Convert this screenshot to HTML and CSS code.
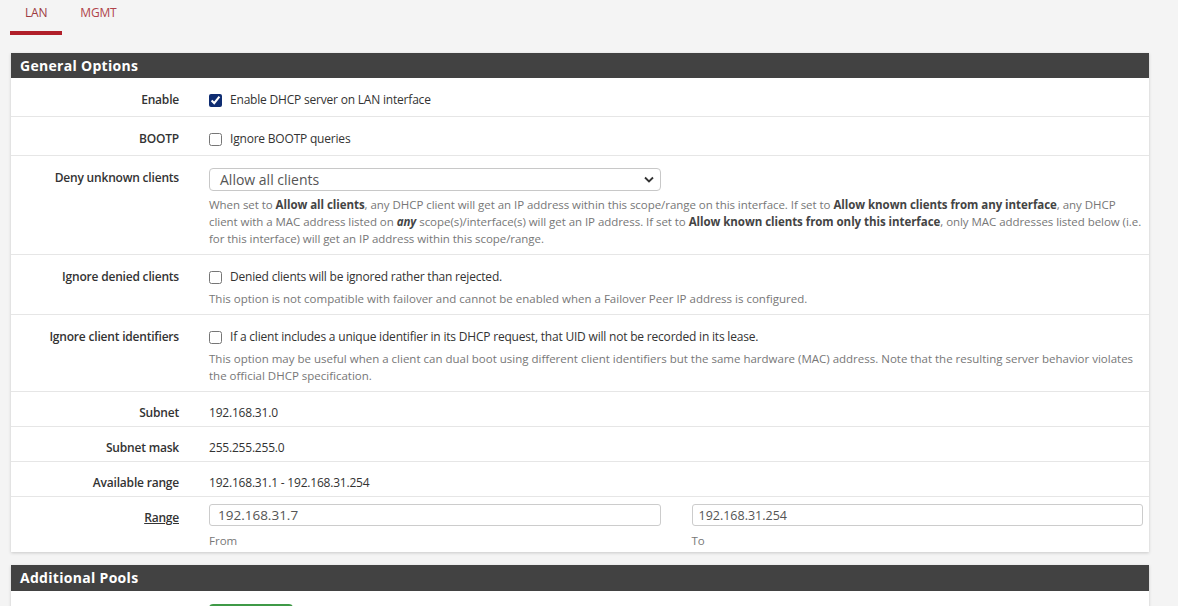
FILE: index.html
```html
<!DOCTYPE html>
<html lang="en">

<head>
    <meta charset="UTF-8">
    <meta name="viewport" content="width=device-width, initial-scale=1.0">
    <title>DHCP Server: LAN</title>
    <link rel="stylesheet" href="styles.css">
</head>

<body>
    <!-- INTERFACE TABS -->
    <ul class="tabs">
        <li class="tab active">LAN</li>
        <li class="tab">MGMT</li>
    </ul>

    <!-- GENERAL OPTIONS -->
    <div class="panel">
        <h2 class="panel-title">General Options</h2>
        <div class="panel-body">
            <div class="form-row">
                <div class="form-label">Enable</div>
                <div class="form-field">
                    <label class="check"><input type="checkbox" class="checked" checked> Enable DHCP server on LAN interface</label>
                </div>
            </div>

            <div class="form-row">
                <div class="form-label">BOOTP</div>
                <div class="form-field">
                    <label class="check"><input type="checkbox"> Ignore BOOTP queries</label>
                </div>
            </div>

            <div class="form-row">
                <div class="form-label">Deny unknown clients</div>
                <div class="form-field">
                    <div class="select">
                        <span>Allow all clients</span>
                        <svg width="10" height="7" viewBox="0 0 10 7">
                            <path d="M1 1.5 L5 5.5 L9 1.5" fill="none" stroke="#333" stroke-width="1.8" />
                        </svg>
                    </div>
                    <p class="help wide">When set to <b>Allow all clients</b>, any DHCP client will get an IP address within this scope/range on this interface. If set to <b>Allow known clients from any interface</b>, any DHCP<br>client with a MAC address listed on <b><i>any</i></b> scope(s)/interface(s) will get an IP address. If set to <b>Allow known clients from only this interface</b>, only MAC addresses listed below (i.e.<br>for this interface) will get an IP address within this scope/range.</p>
                </div>
            </div>

            <div class="form-row">
                <div class="form-label">Ignore denied clients</div>
                <div class="form-field">
                    <label class="check"><input type="checkbox"> Denied clients will be ignored rather than rejected.</label>
                    <p class="help">This option is not compatible with failover and cannot be enabled when a Failover Peer IP address is configured.</p>
                </div>
            </div>

            <div class="form-row">
                <div class="form-label">Ignore client identifiers</div>
                <div class="form-field">
                    <label class="check"><input type="checkbox"> If a client includes a unique identifier in its DHCP request, that UID will not be recorded in its lease.</label>
                    <p class="help">This option may be useful when a client can dual boot using different client identifiers but the same hardware (MAC) address. Note that the resulting server behavior violates the official DHCP specification.</p>
                </div>
            </div>

            <div class="form-row static">
                <div class="form-label">Subnet</div>
                <div class="form-field">192.168.31.0</div>
            </div>

            <div class="form-row static">
                <div class="form-label">Subnet mask</div>
                <div class="form-field">255.255.255.0</div>
            </div>

            <div class="form-row static">
                <div class="form-label">Available range</div>
                <div class="form-field">192.168.31.1 - 192.168.31.254</div>
            </div>

            <div class="form-row range">
                <div class="form-label"><u>Range</u></div>
                <div class="form-field range-inputs">
                    <div>
                        <input type="text" class="text-input" value="192.168.31.7">
                        <p class="help">From</p>
                    </div>
                    <div>
                        <input type="text" class="text-input small" value="192.168.31.254">
                        <p class="help">To</p>
                    </div>
                </div>
            </div>
        </div>
    </div>

    <!-- ADDITIONAL POOLS -->
    <div class="panel">
        <h2 class="panel-title">Additional Pools</h2>
        <div class="panel-body">
            <div class="pool-row">
                <div class="btn-add"></div>
            </div>
        </div>
    </div>
</body>

</html>
```

FILE: styles.css
```css
* {
    margin: 0;
    padding: 0;
    box-sizing: border-box;
    font-family: 'Open Sans', 'Noto Sans', sans-serif;
}

body {
    background-color: #f4f4f4;
    color: #333;
    font-size: 12px;
    padding: 0 29px 0 11px;
    height: 606px;
    overflow: hidden;
}

/* TABS */
.tabs {
    list-style: none;
    display: flex;
    height: 35px;
    margin-left: -1px;
}

.tab {
    padding: 4px 15px 0;
    margin-right: 3px;
    color: #b0434a;
    font-size: 12px;
    letter-spacing: -0.2px;
}

.tab.active {
    color: #9c3a40;
    border-bottom: 4px solid #b11f29;
}

/* PANELS */
.panel {
    margin-top: 18px;
    background-color: #fff;
    box-shadow: 0 1px 3px rgba(0, 0, 0, 0.18);
}

.panel + .panel {
    margin-top: 13px;
}

.panel-title {
    background-color: #424242;
    color: #fff;
    font-size: 14px;
    font-weight: 700;
    height: 25px;
    line-height: 25px;
    padding-left: 9px;
    letter-spacing: 0.3px;
}

.panel + .panel .panel-title {
    height: 26px;
    line-height: 26px;
}

.form-row {
    display: flex;
    border-top: 1px solid #e6e6e6;
    padding: 12px 0 7px;
}

.form-row:first-child {
    border-top: none;
}

.form-row.static {
    padding: 11px 0 4px;
}

.form-row.range {
    padding: 7px 0 3px;
}

.form-label {
    flex: none;
    width: 183px;
    padding-right: 15px;
    text-align: right;
    font-weight: 600;
    line-height: 19px;
    letter-spacing: -0.2px;
}

.form-row.range .form-label {
    padding-top: 4px;
}

.form-field {
    flex: 1;
    padding: 0 6px 0 15px;
    line-height: 19px;
    letter-spacing: -0.2px;
}

.check {
    display: flex;
    align-items: center;
    gap: 8px;
}

.check input {
    width: 13px;
    height: 13px;
    margin: 2px 0 0;
}

.check input.checked {
    accent-color: #0f2d72;
}

.help {
    margin-top: 4px;
    color: #777;
    font-size: 11.5px;
    line-height: 17px;
    letter-spacing: 0;
}

.help.wide {
    margin-top: 5px;
    margin-right: -6px;
    letter-spacing: -0.05px;
}

.help b {
    color: #444;
}

.select {
    width: 452px;
    height: 23px;
    border: 1px solid #c8c8c8;
    border-radius: 4px;
    display: flex;
    align-items: center;
    justify-content: space-between;
    padding: 0 6px 0 10px;
    font-size: 14px;
    color: #555;
    letter-spacing: 0;
}

.range-inputs {
    display: grid;
    grid-template-columns: 1fr 1fr;
    column-gap: 31px;
}

.text-input {
    width: 100%;
    height: 22px;
    border: 1px solid #ccc;
    border-radius: 3px;
    padding: 0 8px;
    font-size: 13.5px;
    color: #555;
    outline: none;
}

.text-input.small {
    padding-left: 6px;
    font-size: 12.5px;
}

.range-inputs .help {
    margin-top: 6px;
}

.pool-row {
    padding: 13px 0 0 198px;
}

.btn-add {
    width: 84px;
    height: 30px;
    background-color: #3f9a47;
    border-radius: 4px;
}
```
